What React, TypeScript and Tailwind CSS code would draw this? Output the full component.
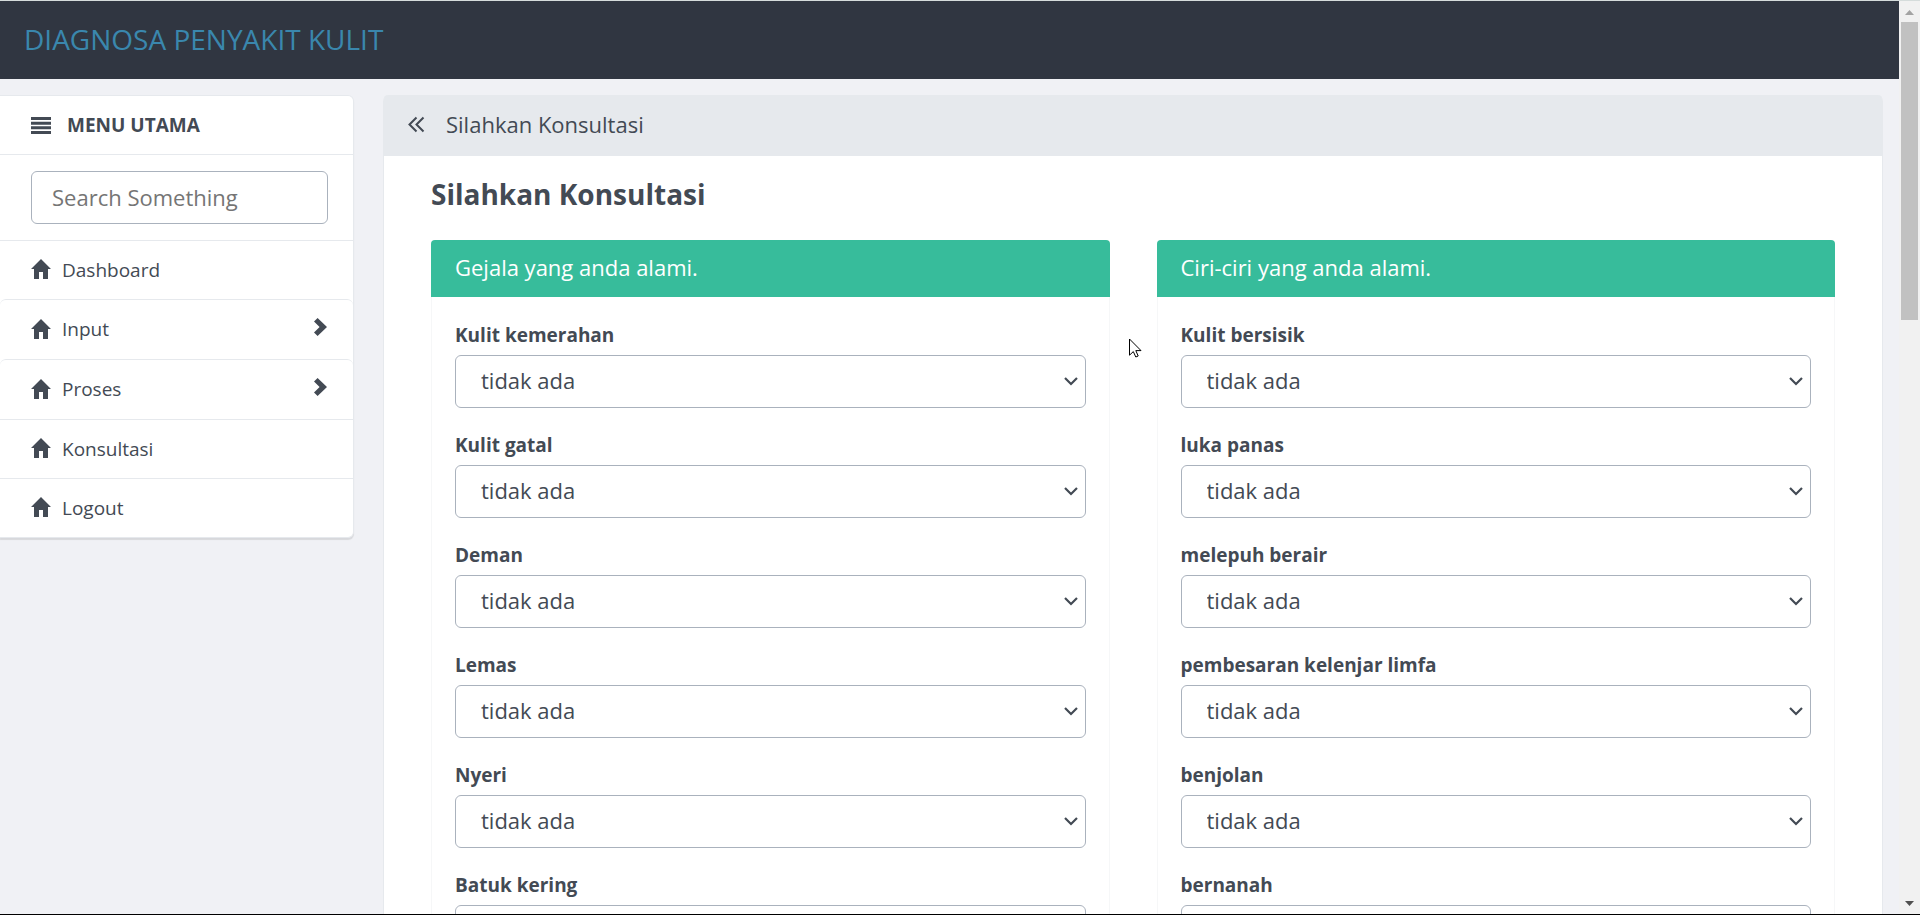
import React from "react";

const symptoms = [
  "Kulit kemerahan",
  "Kulit gatal",
  "Deman",
  "Lemas",
  "Nyeri",
  "Batuk kering",
];

const traits = [
  "Kulit bersisik",
  "luka panas",
  "melepuh berair",
  "pembesaran kelenjar limfa",
  "benjolan",
  "bernanah",
];

const menu = [
  { label: "Dashboard", expandable: false },
  { label: "Input", expandable: true },
  { label: "Proses", expandable: true },
  { label: "Konsultasi", expandable: false },
  { label: "Logout", expandable: false },
];

function HomeIcon() {
  return (
    <svg className="mb-0.5 h-5 w-5 shrink-0" viewBox="0 0 20 20" fill="currentColor" aria-hidden="true">
      <path d="M10 0 20 10H17V20H12V13H8V20H3V10H0Z" />
    </svg>
  );
}

function ChevronRight() {
  return (
    <svg className="mb-1.5 h-[18px] w-[13px]" viewBox="0 0 13 18" fill="currentColor" aria-hidden="true">
      <path d="M3.6 0 13 9 3.6 18 0 14.4 5.6 9 0 3.6Z" />
    </svg>
  );
}

function MenuIcon() {
  return (
    <svg className="h-[17px] w-5" viewBox="0 0 20 17" fill="currentColor" aria-hidden="true">
      <path d="M0 0h20v3H0zM0 4.7h20v3H0zM0 9.3h20v3H0zM0 14h20v3H0z" />
    </svg>
  );
}

function Symptom({ label, id }: { label: string; id: string }) {
  return (
    <div className="mb-6">
      <label htmlFor={id} className="mb-1.5 block text-[19px] leading-[27px] font-bold">
        {label}
      </label>
      <div className="relative">
        <select
          id={id}
          className="block h-[53px] w-full appearance-none rounded-md border border-[#aab2bd] bg-white pr-10 pb-0.5 pl-[25px] text-[22px]"
        >
          <option>tidak ada</option>
          <option>ada</option>
        </select>
        <svg
          className="pointer-events-none absolute top-[22px] right-2 h-[9px] w-[14px]"
          viewBox="0 0 14 9"
          fill="none"
          stroke="currentColor"
          strokeWidth="2.2"
          aria-hidden="true"
        >
          <path d="M1 1 7 7 13 1" />
        </svg>
      </div>
    </div>
  );
}

function Card({ title, items, name }: { title: string; items: string[]; name: string }) {
  return (
    <section className="min-w-0">
      <h3 className="rounded-t bg-[#37bc9b] px-6 pt-[11px] pb-[13px] text-[22px] leading-[33px] text-white">{title}</h3>
      <div className="border-x border-[#f6f7f8] px-[23px] pt-[25px]">
        {items.map((item, i) => (
          <Symptom key={item} label={item} id={`${name}-${i}`} />
        ))}
      </div>
    </section>
  );
}

export default function App() {
  return (
    <div className="flex h-screen overflow-hidden border-t border-b border-t-[#d5dcdb] border-b-black bg-[#f0f1f5] font-['Open_Sans',sans-serif] text-[#434a54]">
      <div className="min-w-0 flex-1 overflow-hidden">
        <header className="bg-[#303641] px-6 pt-[17px] pb-[19px]">
          <a href="#" className="block text-[28px] leading-[42px] text-[#3a87ad]">
            DIAGNOSA PENYAKIT KULIT
          </a>
        </header>

        <div className="flex items-start gap-[29px] pt-4 pr-4">
          <nav className="w-[354px] shrink-0 rounded-md rounded-l-none border border-l-0 border-[#e6e9ed] bg-white shadow-[0_2px_1px_rgba(0,0,0,0.1)]">
            <div className="flex h-[58px] items-center gap-4 pl-[31px]">
              <MenuIcon />
              <h2 className="text-[19px] leading-[27px] font-bold">MENU UTAMA</h2>
            </div>
            <div className="border-t border-[#e6e9ed] py-4 pr-[25px] pl-[31px]">
              <input
                type="text"
                aria-label="Search Something"
                placeholder="Search Something"
                className="block h-[53px] w-full rounded-md border border-[#aab2bd] bg-white px-5 pb-0.5 text-[22px] placeholder:text-[#757575]"
              />
            </div>
            <ul>
              {menu.map((item) => (
                <li key={item.label} className={item.expandable ? "rounded-t-md border-t border-[#e6e9ed]" : "border-t border-[#e6e9ed]"}>
                  <a
                    href="#"
                    className={
                      item.expandable
                        ? "flex h-[59px] items-center gap-[11px] pr-[26px] pl-[31px] text-[19px] leading-[27px]"
                        : "flex h-[58px] items-center gap-[11px] pr-[26px] pl-[31px] text-[19px] leading-[27px]"
                    }
                  >
                    <HomeIcon />
                    <span className="flex-1">{item.label}</span>
                    {item.expandable && <ChevronRight />}
                  </a>
                </li>
              ))}
            </ul>
          </nav>

          <main className="min-w-0 flex-1 rounded-t-md border-x border-[#e6e9ed] bg-white">
            <div className="flex h-[61px] items-center gap-5 rounded-t bg-[#e6e9ed] pb-0.5 pl-6">
              <button type="button" aria-label="Collapse menu" className="flex">
                <svg
                  className="h-[18px] w-[18px]"
                  viewBox="0 0 18 18"
                  fill="none"
                  stroke="currentColor"
                  strokeWidth="2"
                  aria-hidden="true"
                >
                  <path d="M8.5 1.5 1.5 8.5 8.5 15.5M15.5 1.5 8.5 8.5 15.5 15.5" />
                </svg>
              </button>
              <h1 className="text-[22px] leading-[33px]">Silahkan Konsultasi</h1>
            </div>
            <div className="px-[47px] pt-[18px]">
              <h2 className="text-[28px] leading-10 font-bold">Silahkan Konsultasi</h2>
              <form className="mt-[26px] grid grid-cols-2 gap-[47px]">
                <Card title="Gejala yang anda alami." items={symptoms} name="gejala" />
                <Card title="Ciri-ciri yang anda alami." items={traits} name="ciri" />
              </form>
            </div>
          </main>
        </div>
      </div>

      <div className="flex w-[21px] shrink-0 flex-col items-center bg-[#f1f1f1]" aria-hidden="true">
        <svg className="mt-[9px] h-[5px] w-[9px] text-[#a3a3a3]" viewBox="0 0 9 5" fill="currentColor">
          <path d="M0 5 4.5 0 9 5Z" />
        </svg>
        <div className="mt-[7px] h-[298px] w-[17px] bg-[#c1c1c1]" />
        <svg className="mt-auto mb-2 h-[5px] w-[9px] text-[#505050]" viewBox="0 0 9 5" fill="currentColor">
          <path d="M0 0H9L4.5 5Z" />
        </svg>
      </div>

      <svg
        className="pointer-events-none absolute top-[338px] left-[1129px] h-[20px] w-[13px]"
        viewBox="0 0 13 20"
        fill="white"
        stroke="black"
        aria-hidden="true"
      >
        <path d="M.5 1V17.2L4.3 13.6 6.8 19 9.2 18 6.8 12.6H12Z" />
      </svg>
    </div>
  );
}
